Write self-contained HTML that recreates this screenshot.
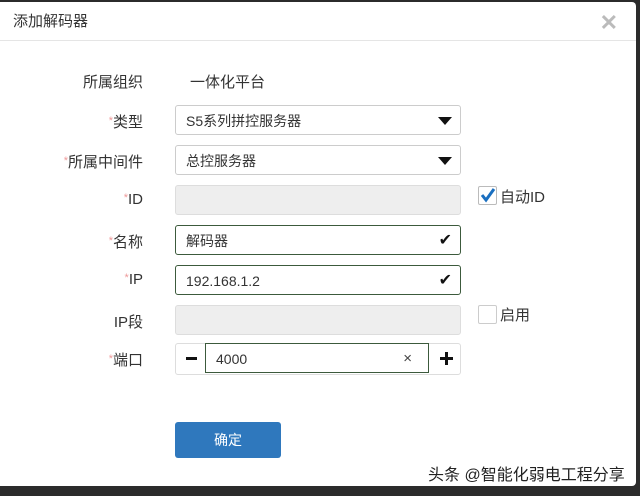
<!DOCTYPE html>
<html><head><meta charset="utf-8"><style>
body{margin:0;width:640px;height:496px;background:#2b2b2b;font-family:"Liberation Sans","Noto Sans CJK SC",sans-serif;overflow:hidden;position:relative}
.dlg{position:absolute;left:0;top:2px;width:636px;height:484px;background:#fff;border-radius:0 4px 4px 0}
.hd{height:38px;border-bottom:1px solid #e5e5e5;font-size:15px;color:#333;line-height:40px;padding-left:13px}
.x{position:absolute;right:18px;top:10px;font-size:22px;color:#bbb;font-weight:bold;line-height:22px}
.lb{position:absolute;width:143px;left:0;text-align:right;font-size:15px;color:#333}
.lb i{color:#e99;font-style:normal;font-size:11px;vertical-align:3px}
.f{position:absolute;left:175px;height:28px;border:1px solid #ccc;border-radius:3px;font-size:14px;color:#333;line-height:30px;padding-left:10px;box-sizing:content-box;width:274px}
.g{background:#eee;border-color:#ddd}
.ok{border-color:#3c5a3c}
.r{position:absolute;right:8px;top:0;font-size:16px;color:#111}
.tri{position:absolute;right:8px;top:11px;width:0;height:0;border-left:7px solid transparent;border-right:7px solid transparent;border-top:8px solid #111}
.cb{position:absolute;left:478px;width:17px;height:17px;border:1px solid #ccc;border-radius:2px;background:#fff}
.ct{position:absolute;left:500px;font-size:15px;color:#333}
</style></head><body>
<div class="dlg">
<div class="hd">添加解码器</div><div class="x">✕</div>
</div>
<div class="lb" style="top:71px">所属组织</div><div style="position:absolute;left:190px;top:71px;font-size:15px;color:#333">一体化平台</div>
<div class="lb" style="top:111px"><i>*</i>类型</div><div class="f" style="top:105px">S5系列拼控服务器<div class="tri"></div></div>
<div class="lb" style="top:151px"><i>*</i>所属中间件</div><div class="f" style="top:145px">总控服务器<div class="tri"></div></div>
<div class="lb" style="top:191px"><i>*</i>ID</div><div class="f g" style="top:185px"></div>
<div class="cb" style="top:186px;border-color:#bbb"><svg width="17" height="17" viewBox="0 0 17 17"><path d="M3 8l4 5 8-11" stroke="#1a6fc0" stroke-width="3" fill="none"/></svg></div><div class="ct" style="top:186px">自动ID</div>
<div class="lb" style="top:231px"><i>*</i>名称</div><div class="f ok" style="top:225px">解码器<span class="r">✔</span></div>
<div class="lb" style="top:271px"><i>*</i>IP</div><div class="f ok" style="top:265px">192.168.1.2<span class="r">✔</span></div>
<div class="lb" style="top:311px">IP段</div><div class="f g" style="top:305px"></div>
<div class="cb" style="top:305px"></div><div class="ct" style="top:304px">启用</div>
<div class="lb" style="top:349px"><i>*</i>端口</div>
<div style="position:absolute;left:175px;top:343px;width:284px;height:30px;border:1px solid #ddd;border-radius:3px"></div>
<div style="position:absolute;left:186px;top:357px;width:11px;height:3px;background:#111"></div>
<div style="position:absolute;left:205px;top:343px;width:224px;height:30px;border:1px solid #3c5a3c;font-size:14px;line-height:30px;padding-left:10px;box-sizing:border-box;color:#333">4000<span style="position:absolute;right:16px;font-size:15px;color:#444">×</span></div>
<div style="position:absolute;left:440px;top:352px;width:13px;height:3px;background:#111;top:357px"></div>
<div style="position:absolute;left:445px;top:352px;width:3px;height:13px;background:#111"></div>
<div style="position:absolute;left:175px;top:422px;width:106px;height:36px;background:#2f78bd;border-radius:3px;color:#fff;font-size:14px;text-align:center;line-height:36px">确定</div>
<div style="position:absolute;left:428px;top:461px;font-size:16px;color:#222;text-shadow:0 0 2px #fff">头条 @智能化弱电工程分享</div>
</body></html>
